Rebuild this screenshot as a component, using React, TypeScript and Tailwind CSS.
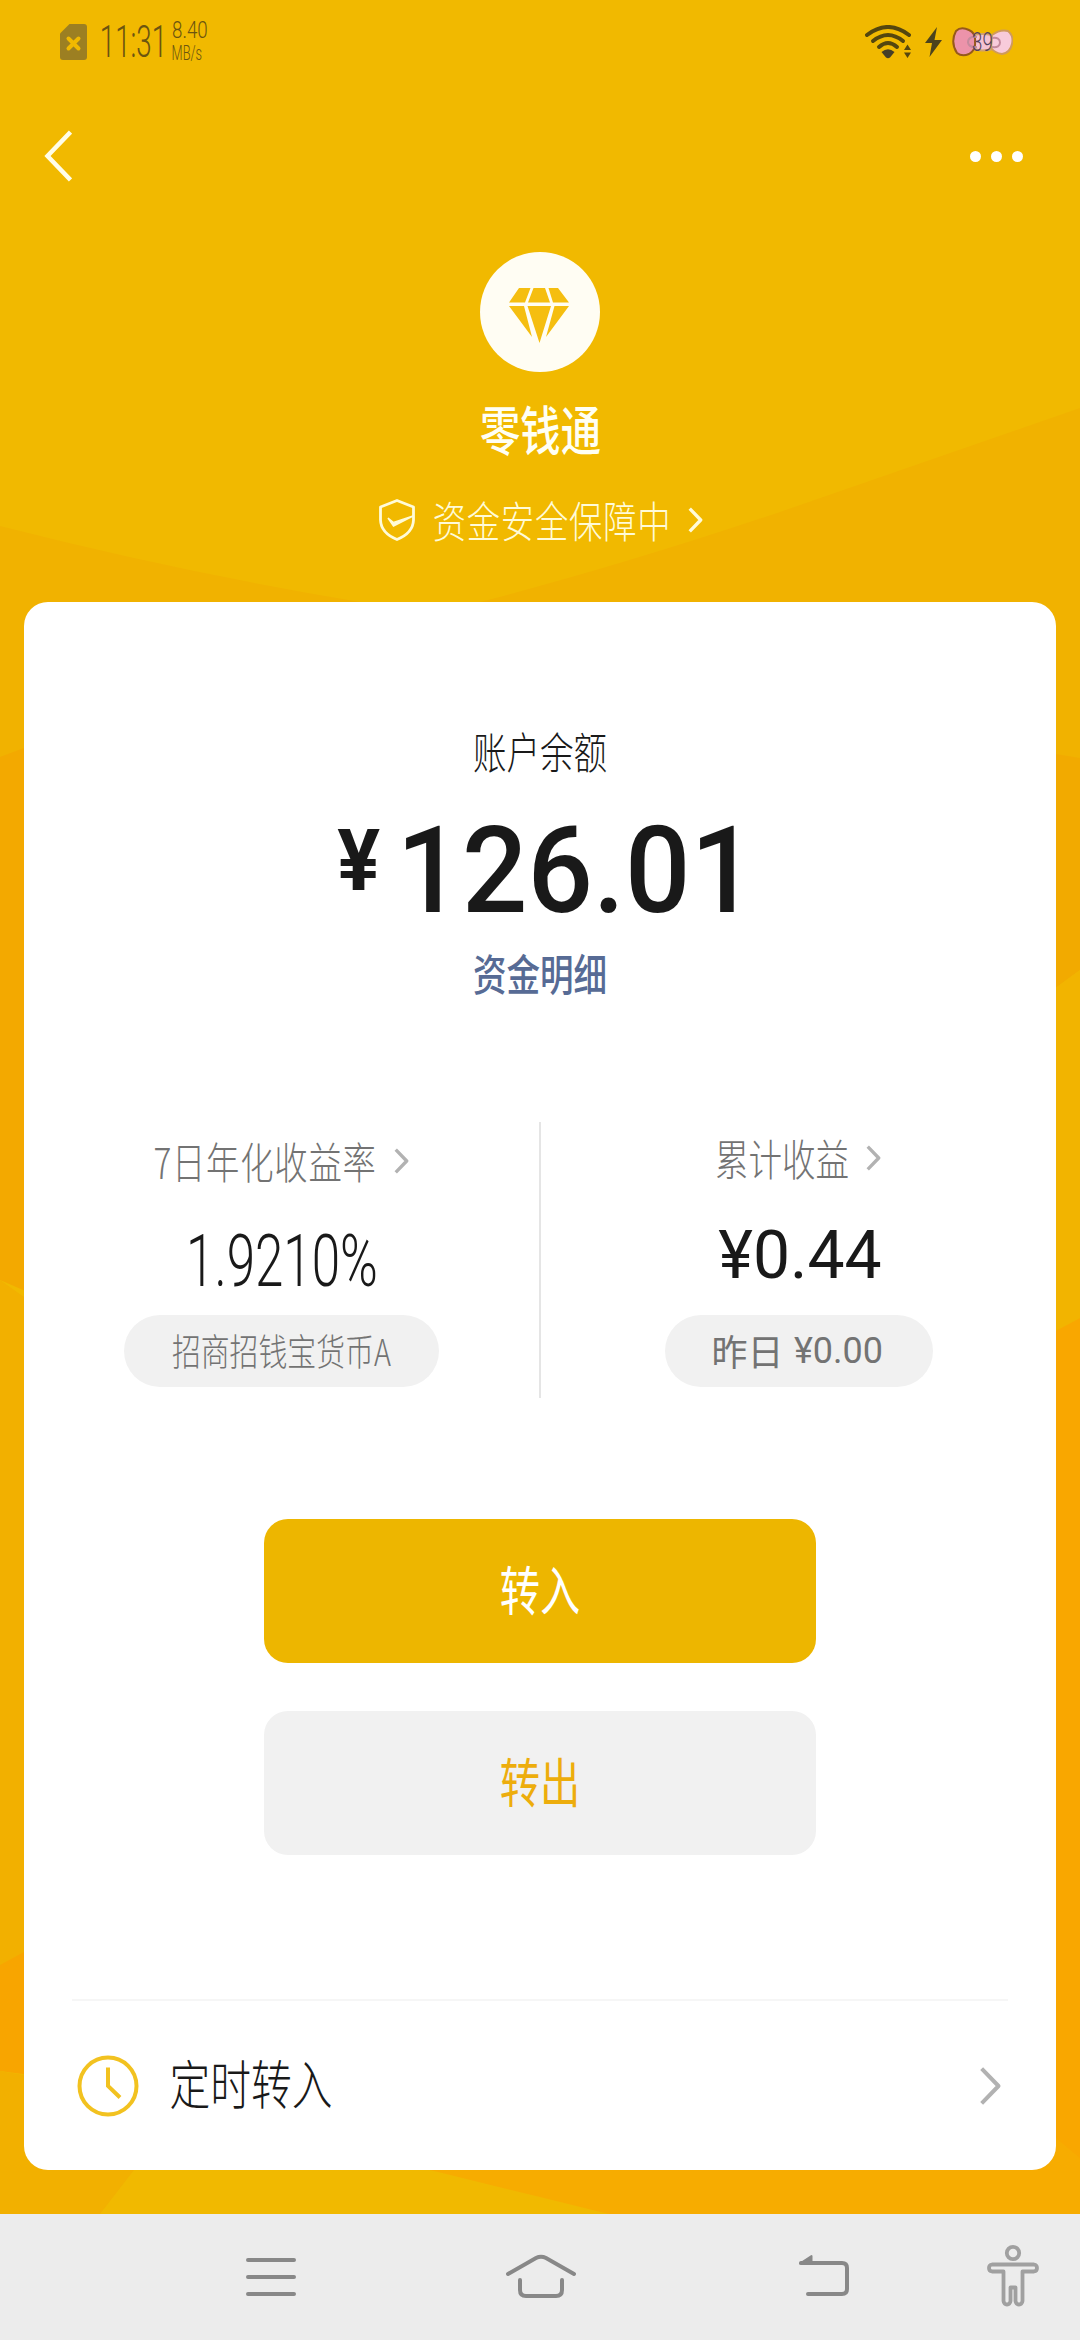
import React from "react";

const CJK = "font-['Noto_Sans_CJK_SC',sans-serif]";
const LATIN = "font-['Roboto','Noto_Sans_CJK_SC',sans-serif]";

/* One line of condensed text: `box` sizes the slot, `text` sets size and horizontal scale. */
function Line({ box, text, children }: { box: string; text: string; children: React.ReactNode }) {
  return (
    <div className={`flex shrink-0 items-center justify-center ${box}`}>
      <span className={`block whitespace-nowrap leading-none ${text}`}>{children}</span>
    </div>
  );
}

function Chevron({ className, width = 3.6 }: { className: string; width?: number }) {
  return (
    <svg viewBox="0 0 16 28" className={`shrink-0 ${className}`} fill="none" stroke="currentColor" strokeWidth={width}>
      <path d="M1.8 1.8 13.6 14 1.8 26.2" strokeLinejoin="round" />
    </svg>
  );
}

function Backdrop() {
  return (
    <svg viewBox="0 0 1080 2214" className="absolute inset-0 h-[2214px] w-[1080px]" aria-hidden="true">
      <rect width="1080" height="2214" fill="#f1b900" />
      <path d="M0 526Q180 572 360 602V757H0Z" fill="#f1b200" />
      <path d="M1080 408 780 512Q620 566 480 602V760H1080Z" fill="#f1b200" />
      <path d="M0 757 24 748H60V1306L0 1280Z" fill="#f3a900" />
      <path d="M0 1280 24 1297H60V1948L0 1965Z" fill="#f2b000" />
      <path d="M0 1965 24 1952H60V2079L0 2071Z" fill="#f8a500" />
      <path d="M0 2071 24 2075 134 2170 100 2214H0Z" fill="#f2b000" />
      <path d="M1020 750 1056 754 1080 758V970L1020 1014Z" fill="#f2aa00" />
      <path d="M1080 970 1020 1014V1350L1080 1318Z" fill="#f2b400" />
      <path d="M1080 1318 1020 1350V2214H1080Z" fill="#f9a700" />
      <path d="M430 2170 540 2197 609 2214H1080V2158L1056 2138 1000 2150Z" fill="#f7ac00" />
    </svg>
  );
}

function StatusBar() {
  return (
    <div className="flex h-[84px] shrink-0 items-center pl-[60px] pr-[67px] text-[#6b5410]">
      <svg viewBox="0 0 27 36" className="h-9 w-[27px]">
        <path d="M9.5 0H24a3 3 0 0 1 3 3v30a3 3 0 0 1-3 3H3a3 3 0 0 1-3-3V9.500Z" fill="#9c7f22" />
        <path d="m8.500 14.500 10 10m0-10-10 10" stroke="#f1b900" strokeWidth="4" strokeLinecap="round" />
      </svg>
      <Line box="ml-[15px] h-[60px] w-[63px]" text={`${LATIN} scale-x-[0.63] text-[44px] font-light`}>11:31</Line>
      <div className="ml-[6px] flex flex-col">
        <Line box="h-[24px] w-[38px] pb-[2px]" text={`${LATIN} scale-x-[0.78] text-[24px] font-light`}>8.40</Line>
        <Line box="ml-[1px] h-[22px] w-[30px] pb-[3px]" text={`${LATIN} scale-x-[0.64] text-[20px] font-light`}>MB/s</Line>
      </div>
      <svg viewBox="0 0 46 34" className="ml-auto h-[34px] w-[46px] shrink-0 text-[#54460f]">
        <g fill="none" stroke="currentColor" strokeWidth="4" strokeLinecap="round">
          <path d="M2 10Q23-6 44 10" />
          <path d="M8 16Q23 4 38 16" />
          <path d="M14 22Q23 14 32 22" />
        </g>
        <path d="M16.500 27Q23 21.500 29.500 27L25 32.500Q23 34 21 32.500Z" fill="#453f28" />
        <path d="M42.500 19.500 46 25H39ZM42.500 33 46 27.500H39Z" fill="#54460f" />
      </svg>
      <svg viewBox="0 0 17 30" className="ml-[14px] h-[30px] w-[17px] shrink-0">
        <path d="M12 0 0 16h7L4.500 30 17 13H9.500Z" fill="#4c431d" />
      </svg>
      <div className="relative ml-[10px] h-[30px] w-[61px] shrink-0">
        <svg viewBox="0 0 61 30" className="h-[30px] w-[61px]" strokeWidth="2">
          <path d="M22 8Q30 6 40 8L41 22Q30 25 22 22Z" fill="#f5c3d4" stroke="#d0a070" />
          <path d="M4 4Q9-1 17 3 24 6 23 15 24 23 17 27 10 30 5 26-2 15 4 4Z" fill="#ec93aa" stroke="#96591b" />
          <path d="M40 8Q48 2 56 4 62 9 60 17 58 26 50 27 43 26 39 21Z" fill="#f8cbdb" stroke="#cf9a5c" />
          <path d="M25 10Q16 9 16 15.500 17 21 25 20M40 11Q48 10 48 15.500 48 21 40 20" fill="none" stroke="#c58a9d" />
        </svg>
        <span className={`absolute left-[20px] top-[2px] origin-left scale-x-[0.72] text-[26px] font-light leading-none text-[#54405b] ${LATIN}`}>39</span>
      </div>
    </div>
  );
}

function TitleBar() {
  return (
    <div className="flex h-[144px] shrink-0 items-center justify-between pl-[44px] pr-[57px]">
      <svg viewBox="0 0 28 52" className="h-[52px] w-7" fill="none" stroke="#fffde8" strokeWidth="4.500">
        <path d="M26.500 2 3.500 26l23 24" />
      </svg>
      <div className="flex gap-[10px]">
        <i className="size-[11px] rounded-full bg-white" />
        <i className="size-[11px] rounded-full bg-white" />
        <i className="size-[11px] rounded-full bg-white" />
      </div>
    </div>
  );
}

function Brand() {
  return (
    <div className="flex flex-col items-center pt-6">
      <div className="flex size-[120px] items-center justify-center rounded-full bg-[#fffdf3]">
        <svg viewBox="0 0 60 56" className="mr-[2px] mt-[7px] h-14 w-[60px]" fill="#f5be10">
          <path d="M10 0H21.500L16 14.500H0ZM24.500 0H36L41 14.500H19ZM39.500 0H49L60 14.500H44ZM0 18H15L23 49ZM18.500 18H42L30.500 55ZM45.500 18H60L37 49Z" />
        </svg>
      </div>
      <Line box="mt-[30px] h-[60px] w-[120px] pb-[8px]" text={`${CJK} scale-x-[0.76] text-[53px] font-medium text-[#fffff4]`}>零钱通</Line>
      <div className="mt-[30px] flex h-[60px] items-center pl-[1px] text-[#fffbd8]">
        <svg viewBox="0 0 36 42" className="-mt-1 h-[42px] w-9" fill="none" stroke="currentColor" strokeWidth="2.800">
          <path d="M18 1.500 34.500 8V21Q34 34 18 40.500 2 34 1.500 21V8Z" strokeLinejoin="round" />
          <path d="M9 19 14.500 27 34 17 14.500 23.500Z" fill="currentColor" strokeWidth="1.500" />
        </svg>
        <Line box="ml-[20px] h-[60px] w-[232px] pb-[6px] pl-[3px]" text={`${CJK} scale-x-[0.775] text-[43px] font-light tracking-[1px]`}>资金安全保障中</Line>
        <Chevron className="-mt-1 ml-[21px] h-[26px] w-[15px]" />
      </div>
    </div>
  );
}

const pill = "flex h-[72px] items-center justify-center rounded-full bg-[#f1f1f1] text-[#737373]";

function Stats() {
  return (
    <div className="mt-[117px] flex h-[276px] shrink-0">
      <div className="flex w-[515px] flex-col items-center">
        <div className="mt-[11px] flex h-[60px] items-center text-[#737373]">
          <Line box="h-[60px] w-[221px] pb-[6px]" text={`${CJK} scale-x-[0.775] text-[43px] font-light tracking-[1px]`}>7日年化收益率</Line>
          <Chevron className="-mt-1 ml-[18px] h-[26px] w-[15px] text-[#b2b2b2]" />
        </div>
        <Line box="mt-[26px] h-[80px] w-[190px] pt-[4px]" text={`${LATIN} scale-x-[0.7] text-[73px] font-light text-[#191919]`}>1.9210%</Line>
        <div className={`mt-4 w-[315px] ${pill}`}>
          <Line box="h-[60px] w-[219px] pb-[2px]" text={`${CJK} scale-x-[0.78] text-[37px] font-light`}>招商招钱宝货币A</Line>
        </div>
      </div>
      <div className="w-[2px] bg-[#e5e5e5]" />
      <div className="flex w-[515px] flex-col items-center">
        <div className="mt-[8px] flex h-[60px] items-center text-[#737373]">
          <Line box="h-[60px] w-[132px] pb-[6px]" text={`${CJK} scale-x-[0.78] text-[43px] font-light`}>累计收益</Line>
          <Chevron className="-mt-1 ml-[18px] h-[26px] w-[15px] text-[#b2b2b2]" />
        </div>
        <Line box="mt-[23px] h-[80px] w-[165px] pl-[3px] pt-[5px]" text={`${LATIN} text-[66px] text-[#191919]`}>¥0.44</Line>
        <div className={`mt-[22px] w-[268px] gap-[12px] ${pill}`}>
          <Line box="h-[60px] w-[68px] pb-[3px]" text={`${CJK} text-[36px]`}>昨日</Line>
          <Line box="h-[60px] w-[90px]" text={`${LATIN} text-[36px]`}>¥0.00</Line>
        </div>
      </div>
    </div>
  );
}

function Card() {
  return (
    <div className="mx-6 mt-[50px] flex h-[1568px] shrink-0 flex-col rounded-[24px] bg-white pt-[121px]">
      <Line box="h-[60px] pb-[6px]" text={`${CJK} scale-x-[0.78] text-[43px] font-light text-[#191919]`}>账户余额</Line>
      <div className={`mt-[26px] flex h-[120px] justify-center text-[#191919] ${LATIN}`}>
        <Line box="mt-[8px] h-[88px] w-[46px]" text="scale-x-[0.94] text-[85px] font-bold">¥</Line>
        <Line box="ml-[22px] h-[120px] w-[340px] pl-[5px] pt-[3px]" text="scale-x-[0.96] text-[120px] font-medium">126.01</Line>
      </div>
      <Line box="mt-4 h-[60px] pb-[6px]" text={`${CJK} scale-x-[0.78] text-[43px] font-medium text-[#576b95]`}>资金明细</Line>
      <Stats />
      <div className="mt-[121px] flex shrink-0 flex-col items-center gap-12">
        <button className="flex h-36 w-[552px] items-center justify-center rounded-[24px] bg-[#edb600] text-white">
          <Line box="h-[60px] w-[80px] pb-[6px]" text={`${CJK} scale-x-[0.76] text-[53px]`}>转入</Line>
        </button>
        <button className="flex h-36 w-[552px] items-center justify-center rounded-[24px] bg-[#f1f1f1] text-[#edad0c]">
          <Line box="h-[60px] w-[80px] pb-[6px]" text={`${CJK} scale-x-[0.76] text-[53px]`}>转出</Line>
        </button>
      </div>
      <div className="mx-12 mt-36 h-[2px] shrink-0 bg-[#f6f6f6]" />
      <div className="flex h-[169px] shrink-0 items-center pl-[53px] pr-[54px]">
        <svg viewBox="0 0 62 62" className="h-[62px] w-[62px]" fill="none" stroke="#f2c220" strokeWidth="4">
          <circle cx="31" cy="31" r="28.500" />
          <path d="M31 12.500V31L43 42.500" />
        </svg>
        <Line box="ml-[31px] h-[60px] w-[161px] pb-[6px]" text={`${CJK} scale-x-[0.77] text-[53px] font-light text-[#191919]`}>定时转入</Line>
        <Chevron className="ml-auto h-[40px] w-[23px] text-[#b2b2b2]" width={2.800} />
      </div>
    </div>
  );
}

function SystemNav() {
  return (
    <div className="mt-auto flex h-[126px] shrink-0 bg-[#ececec] pl-[246px] pt-[27px] text-[#888888]">
      <svg viewBox="0 0 50 68" className="h-[68px] w-[50px]" fill="none" stroke="currentColor" strokeWidth="4" strokeLinecap="round">
        <path d="M2 19H48M2 36H48M2 53H48" />
      </svg>
      <svg viewBox="0 0 72 68" className="ml-[209px] h-[68px] w-[72px]" fill="none" stroke="currentColor" strokeWidth="4" strokeLinecap="round">
        <path d="M3 33 31 17Q36 14.500 41 17L69 33" />
        <path d="M15 39V49Q15 55 21 55H51Q57 55 57 49V39" />
      </svg>
      <svg viewBox="0 0 52 68" className="ml-[220px] h-[68px] w-[52px]" fill="none" stroke="currentColor" strokeWidth="4" strokeLinecap="round">
        <path d="M4 22H45Q50 22 50 27V48Q50 53 45 53H11" />
        <path d="M3 22.500 14.500 15V22.500Z" fill="currentColor" strokeWidth="2" strokeLinejoin="round" />
      </svg>
      <svg viewBox="0 0 52 68" className="ml-[138px] h-[68px] w-[52px] text-[#a0a0a0]" fill="none" stroke="currentColor" strokeWidth="3.800" strokeLinejoin="round">
        <circle cx="26" cy="12" r="6.200" />
        <path d="M5 23.500H47Q50 24 50 27T47 30.500H35.500V60Q35 63.500 32 63.500T28.500 60V46.500H23.500V60Q23 63.500 20 63.500T16.500 60V30.500H5Q2 30 2 27T5 23.500Z" />
      </svg>
    </div>
  );
}

export default function App() {
  return (
    <div className="relative h-[2340px] w-[1080px] overflow-hidden bg-[#f1b900]">
      <Backdrop />
      <div className="relative flex h-full flex-col">
        <StatusBar />
        <TitleBar />
        <Brand />
        <Card />
        <SystemNav />
      </div>
    </div>
  );
}
